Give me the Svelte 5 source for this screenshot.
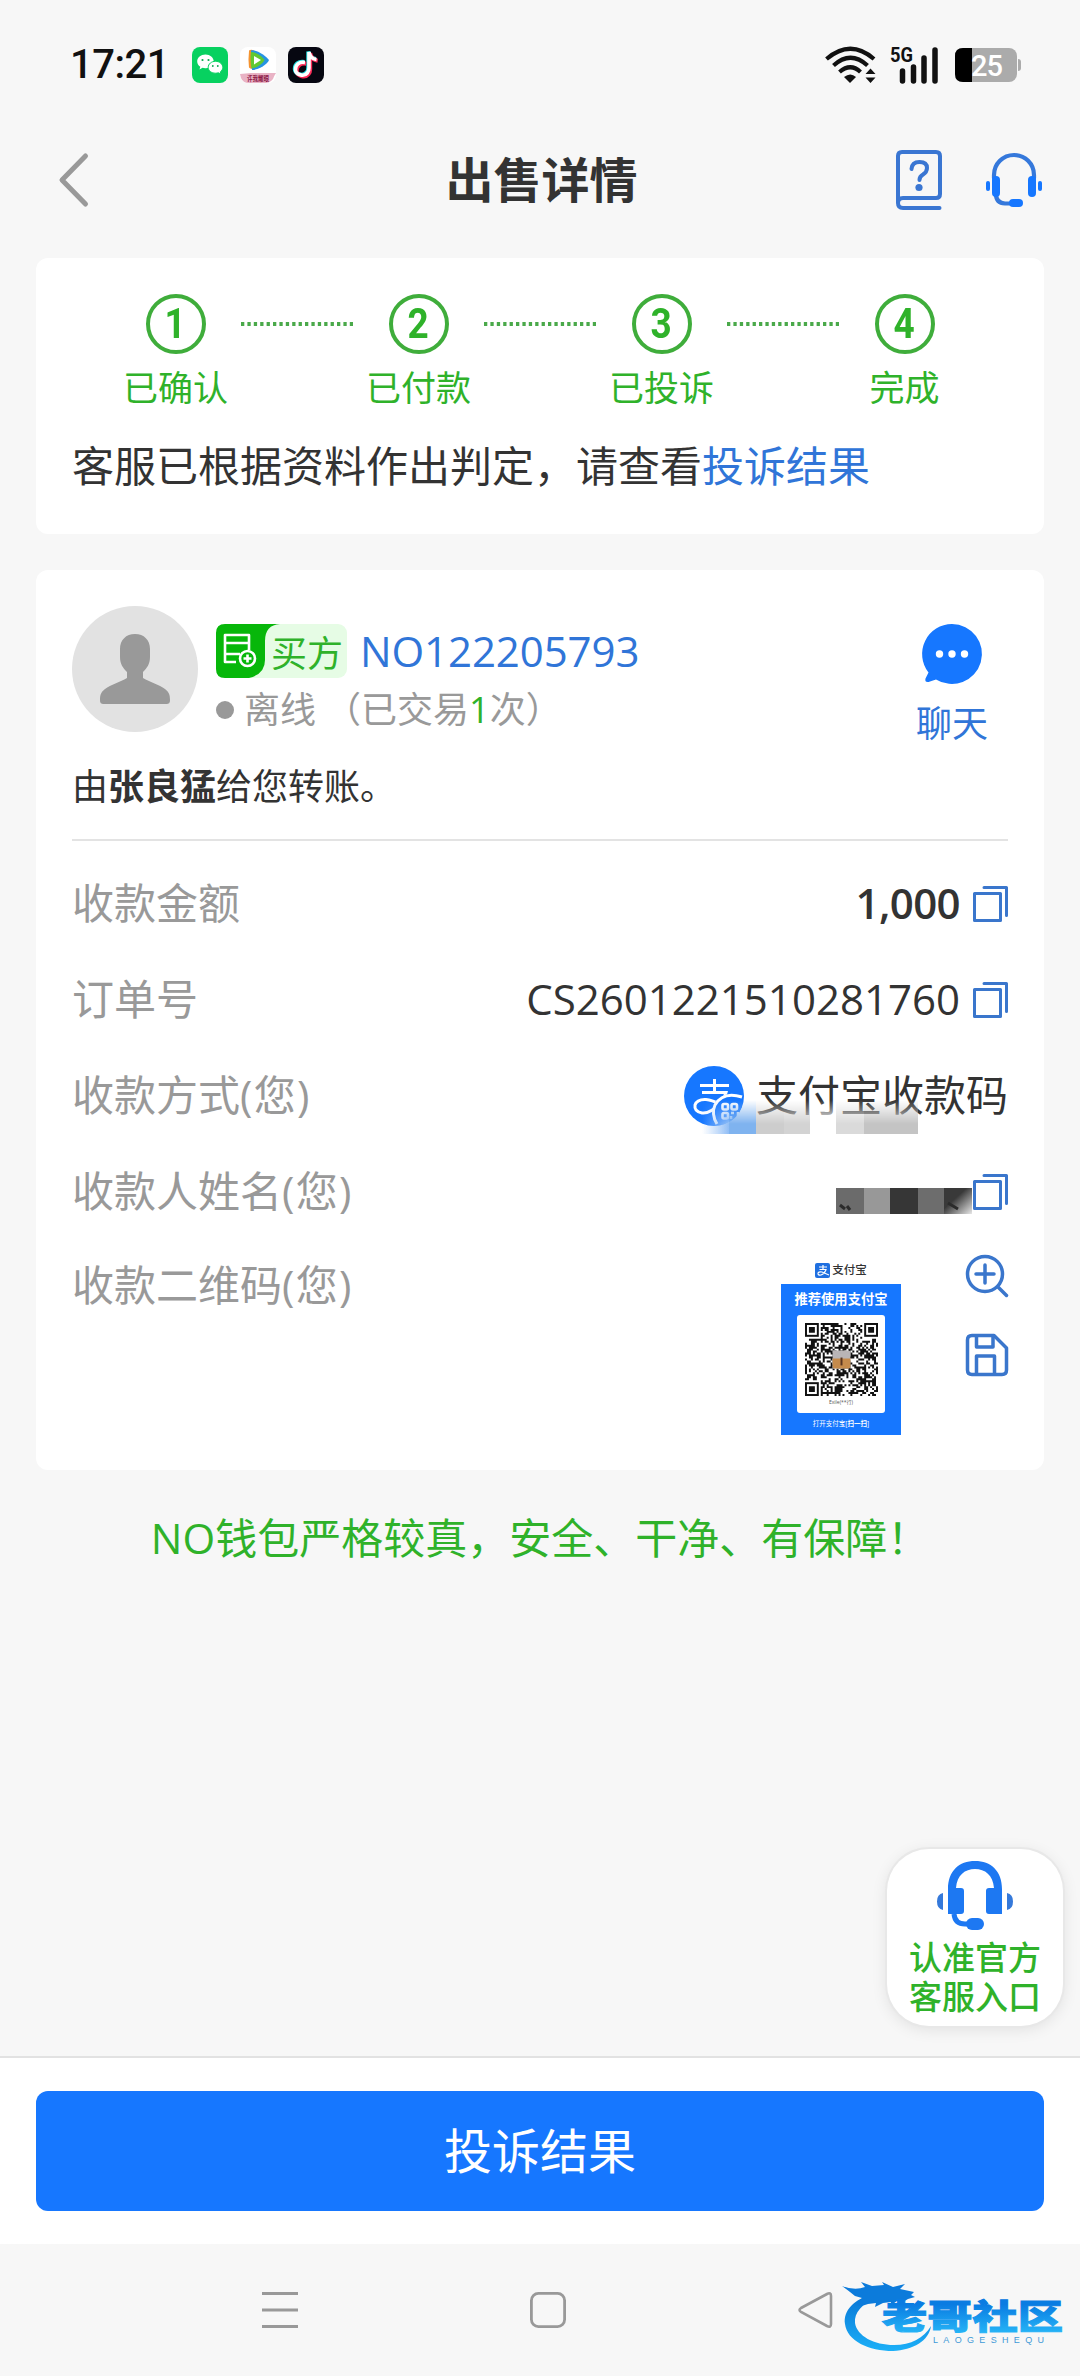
<script>
	const steps = [
		{ number: 1, label: "已确认" },
		{ number: 2, label: "已付款" },
		{ number: 3, label: "已投诉" },
		{ number: 4, label: "完成" }
	];

	const QR_SIZE = 37;

	const isFinder = (x, y) => {
		const corners = [[0, 0], [QR_SIZE - 7, 0], [0, QR_SIZE - 7]];
		return corners.some(([cx, cy]) => x >= cx - 1 && x <= cx + 7 && y >= cy - 1 && y <= cy + 7);
	}

	const getQrPath = () => {
		let seed = 20260;
		let path = "";
		for (let y = 0; y < QR_SIZE; y++) {
			for (let x = 0; x < QR_SIZE; x++) {
				seed = (seed * 1103515245 + 12345) % 2147483648;
				if (isFinder(x, y)) continue;
				if ((seed >> 12) % 100 < 50) path += `M${x} ${y}h1v1h-1z`;
			}
		}
		return path;
	}

	const qrPath = getQrPath();
</script>

{#snippet copyIcon()}
	<svg class="copy" width="36" height="38" viewBox="0 0 36 38" fill="none" stroke="#3a76cc" stroke-width="3" stroke-linejoin="round" stroke-linecap="round">
		<rect x="2.5" y="8.5" width="26" height="27" />
		<path d="M12 2.5h22.500v28" />
	</svg>
{/snippet}

<main lang="zh-CN">
	<div class="status-bar">
		<span class="time">17:21</span>
		<svg width="36" height="36" viewBox="0 0 36 36">
			<rect width="36" height="36" rx="8" fill="#07d160" />
			<path d="M13.500 7.500c-4.700 0-8.300 3-8.300 6.900 0 2.200 1.200 4.100 3.100 5.400l-.8 2.600 3-1.600c1.200.3 2.200.5 3.400.4 4.400-.2 7.800-3.200 7.800-6.900 0-3.800-3.700-6.800-8.200-6.800z" fill="#fff" />
			<path d="M23.500 14.300c4 0 7.300 2.700 7.300 6.100 0 1.800-1 3.400-2.500 4.500l.6 2.200-2.500-1.300c-.9.3-1.900.4-2.900.4-4.100 0-7.300-2.600-7.300-5.800 0-3.400 3.200-6.100 7.300-6.100z" fill="#fff" stroke="#07d160" stroke-width="1" />
			<g fill="#07a84e"><circle cx="10.500" cy="13" r="1.100" /><circle cx="16.500" cy="13" r="1.100" /><circle cx="20.800" cy="19" r=".9" /><circle cx="25.800" cy="19" r=".9" /></g>
		</svg>
		<svg width="36" height="36" viewBox="0 0 36 36">
			<rect width="36" height="36" rx="8" fill="#fff" />
			<path d="M9 3.500q-1 9.500 0 17 1.500 2 5 1L14 3.500q-3-1.500-5 0z" fill="#f59331" />
			<path d="M11 3.500c5-1.500 15 5 18 9.500-2 5-11 10-17 10z" fill="#2694e2" />
			<path d="M11 5c5 0 11 4 13.500 8-2 4-8 8-13 8.500-1-5-1.300-11-.5-16.500z" fill="#62c832" />
			<path d="M14 9l7 4-7 4.500z" fill="#fff" />
			<path d="M0 27l11-1 25 0q-2 3-3 6-3 4-8 4H9q-6 0-8-5z" fill="#e9b3c5" />
			<text x="18" y="33.500" font-size="7" font-weight="700" fill="#8d1747" text-anchor="middle" textLength="22" lengthAdjust="spacingAndGlyphs">许我耀眼</text>
		</svg>
		<svg width="36" height="36" viewBox="0 0 36 36" fill="none" stroke-width="4">
			<rect width="36" height="36" rx="8" fill="#060711" />
			<path d="M17 15.500c-6-1-9.500 2.500-9.500 7 0 5 8 8 11.800 3.500 1.300-1.500 1.700-3 1.700-5V5c.8 4.500 3.500 7 7.500 7.500" stroke="#27e4e8" transform="translate(-.7 -.6)" />
			<path d="M17 15.500c-6-1-9.500 2.500-9.500 7 0 5 8 8 11.800 3.500 1.300-1.500 1.700-3 1.700-5V5c.8 4.500 3.500 7 7.500 7.500" stroke="#fb2c59" transform="translate(1.200 1.200)" />
			<path d="M17 15.500c-6-1-9.500 2.500-9.500 7 0 5 8 8 11.800 3.500 1.300-1.500 1.700-3 1.700-5V5c.8 4.500 3.500 7 7.500 7.500" stroke="#fff" stroke-width="3.600" />
		</svg>
		<div class="signals">
			<svg width="52" height="38" viewBox="0 0 52 38" fill="none" stroke="#111" stroke-width="4.200">
				<path d="M1.500 13Q25.500-7.500 49 13M8.500 19.500Q25.500 4 42.500 19.500M14.500 26Q25.500 16.500 35.500 26" />
				<path d="M19 31q6.500-5 12 0l-6 6z" fill="#111" stroke="none" />
				<path d="M40.500 28l5-5.500 5 5.500zM40.500 31.500h10l-5 5.500z" fill="#111" stroke="none" />
			</svg>
			<svg class="cellular" width="50" height="46" viewBox="0 -8 50 46">
				<text x="0" y="16" font-size="21" font-weight="700" fill="#111" textLength="23" lengthAdjust="spacingAndGlyphs">5G</text>
				<path d="M12.500 25v10M23.500 21v14M34 12v23M45 4v31" stroke="#111" stroke-width="5.500" stroke-linecap="round" />
			</svg>
			<svg width="66" height="34" viewBox="0 0 66 34">
				<rect width="62" height="34" rx="8" fill="#ababab" />
				<path d="M63 11q3 0 3 3v6q0 3-3 3z" fill="#ababab" />
				<path d="M17 0H8Q0 0 0 8v18q0 8 8 8h9z" fill="#000" />
				<text x="32" y="28" font-size="29" font-weight="500" fill="#fff" text-anchor="middle" textLength="32">25</text>
			</svg>
		</div>
	</div>

	<header>
		<svg class="back" width="34" height="56" viewBox="0 0 34 56" fill="none" stroke="#999" stroke-width="5" stroke-linecap="round" stroke-linejoin="round">
			<path d="M27.500 4L4 28l23.500 24" />
		</svg>
		<h1>出售详情</h1>
		<div class="header-icons">
			<svg width="48" height="62" viewBox="0 0 48 62" fill="none" stroke="#3a76d2" stroke-width="4" stroke-linecap="round" stroke-linejoin="round">
				<path d="M44.500 59H8q-5 0-5-5V7q0-4 4-4h34q4 0 4 4v38q0 4-4 4H8q-5 0-5 5" />
				<path d="M16.500 20q.500-7 8-7t7.500 6q0 4-4 6.500-3.500 2-3.500 5.500" />
				<circle cx="24" cy="38.500" r="3.600" fill="#3a76d2" stroke="none" />
			</svg>
			<svg width="58" height="58" viewBox="0 0 58 58" fill="none" stroke="#3578db" stroke-width="4.200" stroke-linecap="round">
				<path d="M9 27v-3a20 20 0 0 1 40 0v3M11 43q0 9 9 9.500h8" />
				<g fill="#1677ff" stroke="none">
					<rect x="7" y="25" width="8" height="21" rx="4" />
					<rect x="43" y="25" width="8" height="21" rx="4" />
					<rect x="24" y="48" width="14" height="8" rx="4" />
					<rect x="1" y="30" width="4" height="10" rx="2" />
					<rect x="53" y="30" width="4" height="10" rx="2" />
				</g>
			</svg>
		</div>
	</header>

	<section class="card progress">
		<div class="steps">
			{#each steps as step, index}
				{#if index > 0}
					<svg class="dots" width="112" height="4" viewBox="0 0 112 4">
						<path d="M0 2h112" stroke="#4aa94a" stroke-width="4" stroke-dasharray="3.300 3.100" />
					</svg>
				{/if}
				<div class="step">
					<div class="circle"><span>{step.number}</span></div>
					<span class="step-label">{step.label}</span>
				</div>
			{/each}
		</div>
		<p>客服已根据资料作出判定，请查看<a href="#result">投诉结果</a></p>
	</section>

	<section class="card order">
		<div class="buyer">
			<svg class="avatar" width="126" height="126" viewBox="0 0 126 126">
				<circle cx="63" cy="63" r="63" fill="#e2e2e2" />
				<path d="M63 28c9 0 15 6 15 15v8c0 7-3 11-7 15v6c7 4 15 6 22 11 4 3 5 6 5 11 0 3-1 4-4 4H32c-3 0-4-1-4-4 0-5 1-8 5-11 7-5 15-7 22-11v-6c-4-4-7-8-7-15v-8c0-9 6-15 15-15z" fill="#999" />
			</svg>
			<div class="buyer-info">
				<div class="buyer-id">
					<div class="badge">
						<svg width="64" height="54" viewBox="0 0 64 54" fill="none" stroke="#fff" stroke-width="2.600">
							<path d="M9 0h55q-15 1-15 17v19q0 14-16 18H9q-9 0-9-9V9q0-9 9-9z" fill="#07b70a" stroke="none" />
							<path d="M20 38H9V30h12M33 26V11H9v8h24M9 19v11M9 30h15" stroke-linejoin="round" />
							<circle cx="31.500" cy="34.500" r="7.500" />
							<path d="M31.500 30.500v8M27.500 34.500h8" />
						</svg>
						<span>买方</span>
					</div>
					<span class="number">NO122205793</span>
				</div>
				<div class="buyer-status"><i></i>离线<span class="deals">（已交易<b>1</b>次）</span></div>
			</div>
			<div class="chat">
				<svg width="60" height="60" viewBox="0 0 60 60">
					<path d="M30 0a30 30 0 1 1-16 55.400L6.500 58q-4 .5-3-3.500L6.500 48.500A30 30 0 0 1 30 0z" fill="#1677ff" />
					<g fill="#fff"><circle cx="17.500" cy="30" r="3.700" /><circle cx="30" cy="30" r="3.700" /><circle cx="42.500" cy="30" r="3.700" /></g>
				</svg>
				<span>聊天</span>
			</div>
		</div>
		<p class="transfer">由<b>张良猛</b>给您转账。</p>

		<div class="rows">
			<div class="row">
				<span class="label">收款金额</span>
				<span class="value amount">1,000</span>
				{@render copyIcon()}
			</div>
			<div class="row">
				<span class="label">订单号</span>
				<span class="value">CS2601221510281760</span>
				{@render copyIcon()}
			</div>
			<div class="row">
				<span class="label">收款方式<span class="owner">(您)</span></span>
				<svg class="alipay" width="60" height="60" viewBox="0 0 60 60" fill="none" stroke="#fff" stroke-width="3">
					<circle cx="30" cy="30" r="30" fill="#1677ff" stroke="none" />
					<path d="M16 19.500h29M30.500 13v13M18 26.500h24q-2 7-7 12M35 38q-9 10-17 9-8-1.500-7-8 2-6 11-5.500 6 .5 13 4.500" />
					<path d="M29 48q-1-17 16-20 8-.5 14 4.500-1 20-20 26-9-2-10-10.500z" fill="#1677ff" stroke="none" />
					<path d="M33 58q-6-10-2-19 8-14 27-8" />
					<g stroke-width="2.600"><rect x="38.500" y="38" width="5.500" height="5.500" rx="1.500" /><rect x="47.500" y="38" width="5.500" height="5.500" rx="1.500" /><rect x="38.500" y="47" width="5.500" height="5.500" rx="1.500" /><path d="M47 47h3M54 46v4M47 53v-3M51 53h4" /></g>
				</svg>
				<span class="value">支付宝收款码</span>
				<svg class="mosaic" width="218" height="34" viewBox="0 0 218 34">
					<defs>
						<linearGradient id="fade" x1="0" y1="0" x2="0" y2="1"><stop offset="0" stop-color="#fff" stop-opacity="0" /><stop offset=".7" stop-color="#fff" /></linearGradient>
						<linearGradient id="edge" x1="0" y1="0" x2="1" y2="0"><stop offset="0" stop-color="#a9ccf8" stop-opacity="0" /><stop offset="1" stop-color="#90bdf5" /></linearGradient>
						<mask id="fade-mask"><rect width="218" height="34" fill="url(#fade)" /></mask>
					</defs>
					<g mask="url(#fade-mask)">
						<path d="M0 0h27v34H0z" fill="url(#edge)" />
						<path d="M27 0h27v34H27z" fill="#7fb3ef" />
						<path d="M54 0h28v34H54z" fill="#cdcdcd" />
						<path d="M82 0h26v34H82z" fill="#d3d3d3" />
						<path d="M108 0h26v34h-26z" fill="#fff" />
						<path d="M134 0h28v34h-28z" fill="#dadada" />
						<path d="M162 0h54v34h-54z" fill="#c4c4c4" />
					</g>
				</svg>
			</div>
			<div class="row">
				<span class="label">收款人姓名<span class="owner">(您)</span></span>
				<svg class="hidden-name" width="136" height="26" viewBox="0 0 136 26">
					<defs>
						<linearGradient id="corner" x1="0" y1="0" x2="1" y2="1"><stop offset=".4" stop-color="#393939" /><stop offset="1" stop-color="#e8e8e8" /></linearGradient>
					</defs>
					<path d="M0 0h28v26H0z" fill="#6b6b6b" />
					<path d="M28 0h26v26H28z" fill="#989898" />
					<path d="M54 0h28v26H54z" fill="#363636" />
					<path d="M82 0h26v26H82z" fill="#6d6d6d" />
					<path d="M108 0h28v26h-28z" fill="url(#corner)" />
					<path d="M4 17l5 4M11 18l3 4M112 15l10 6" stroke="#2b2b2b" stroke-width="3" />
				</svg>
				{@render copyIcon()}
			</div>
			<div class="row qr-row">
				<span class="label">收款二维码<span class="owner">(您)</span></span>
				<div class="qr-card">
					<div class="qr-brand">
						<svg width="15" height="15" viewBox="0 0 15 15" fill="none" stroke="#fff" stroke-width="1.200">
							<rect width="15" height="15" rx="2" fill="#1f6fe0" stroke="none" />
							<path d="M4 4h8M8 2v4M4.500 6.500h6.500q-1.500 4.500-5 5.500-3 .5-3-1.500t4-1.500l7 3" />
						</svg>
						支付宝
					</div>
					<div class="qr-body">
						<span class="qr-title">推荐使用支付宝</span>
						<div class="qr-box">
							<svg width="73" height="73" viewBox="0 0 37 37">
								<path d={qrPath} fill="#111" />
								<g fill="none" stroke="#111">
									<rect x=".5" y=".5" width="6" height="6" />
									<rect x="30.500" y=".5" width="6" height="6" />
									<rect x=".5" y="30.500" width="6" height="6" />
								</g>
								<path d="M2 2h3v3H2zM32 2h3v3h-3zM2 32h3v3H2z" fill="#111" />
								<rect x="14" y="14" width="9" height="9" rx="1" fill="#b9b5b6" />
								<path d="M14 18h9v4q0 1-1 1h-7q-1 0-1-1z" fill="#c58b4c" />
								<path d="M18 17.500h1v4h-1z" fill="#5b3722" />
							</svg>
							<span>Exile(**行)</span>
						</div>
						<span class="qr-hint">打开支付宝[<b>扫一扫</b>]</span>
					</div>
				</div>
				<div class="qr-actions">
					<svg width="44" height="44" viewBox="0 0 44 44" fill="none" stroke="#3a76cc" stroke-width="3.500" stroke-linecap="round">
						<circle cx="20" cy="20" r="17.500" />
						<path d="M20 11v18M11 20h18M33 33l8.500 8.500" />
					</svg>
					<svg width="44" height="44" viewBox="0 0 44 44" fill="none" stroke="#3a76cc" stroke-width="3.500" stroke-linejoin="round">
						<path d="M7 2.500h22L41.500 15v22q0 4.500-4.500 4.500H7q-4.500 0-4.500-4.500V7q0-4.500 4.500-4.500z" />
						<path d="M11.500 3v11h16.500V3M11.500 41V23h18v18" />
					</svg>
				</div>
			</div>
		</div>
	</section>

	<p class="slogan">NO钱包严格较真，安全、干净、有保障！</p>

	<div class="support">
		<svg width="78" height="72" viewBox="0 0 78 72">
			<path d="M12 54V29C12 11 23 1 39 1s27 10 27 28v25H53q-3 0-3-3V31q0-3 3-3h5C57 15 49 9 39 9s-18 6-19 19h5q3 0 3 3v20q0 3-3 3z" fill="#1d78f2" />
			<path d="M18 54q1 10 11 10h6" fill="none" stroke="#1d78f2" stroke-width="5" />
			<rect x="30" y="58" width="18" height="12" rx="6" fill="#1d78f2" />
			<path d="M7 33v17q-6-1-6-8.500T7 33zM71 33v17q6-1 6-8.500T71 33z" fill="#3579da" />
		</svg>
		<span>认准官方<br>客服入口</span>
	</div>

	<footer>
		<button>投诉结果</button>
	</footer>

	<nav>
		<svg width="38" height="38" viewBox="0 0 38 38" stroke="#999" stroke-width="3">
			<path d="M1 2.500h36M1 19h36M1 35.500h36" />
		</svg>
		<svg width="38" height="38" viewBox="0 0 38 38" fill="none" stroke="#999" stroke-width="2.800">
			<rect x="2.400" y="2.400" width="33.200" height="33.200" rx="7" />
		</svg>
		<svg width="38" height="38" viewBox="0 0 38 38" fill="none" stroke="#999" stroke-width="2.600">
			<path d="M4 17L30 3q4-2 4 2v28q0 4-4 2L4 21q-3-2 0-4z" />
		</svg>
		<svg class="logo" width="224" height="74" viewBox="0 0 224 74">
			<defs>
				<linearGradient id="wave" x1="0" y1="0" x2="0" y2="1"><stop offset="0" stop-color="#0874d4" /><stop offset="1" stop-color="#1cb0f8" /></linearGradient>
				<linearGradient id="word" x1="0" y1="0" x2="0" y2="1"><stop offset=".25" stop-color="#0a7ce2" /><stop offset="1" stop-color="#2bc0fb" /></linearGradient>
			</defs>
			<path d="M31 15C12 20 1 32 3 45c2 17 24 27 48 27 20-1 36-10 38-25-7 12-20 19-37 19-20 0-37-9-39-22-1-10 7-20 22-25z" fill="url(#wave)" />
			<path d="M0 7q13 5 23 1l-4-5 11 4 12-1-2-3 11 5 12-3-5 5 14 3-3 3 4 2-7 2-5 3-6-1-7 5 1-4-8 1-8 4 1-4-8 1q-7 3-11 1l5-7-7-2Q7 12 0 7z" fill="#0c7bdb" />
			<text x="40" y="50" class="logo-name" textLength="181" lengthAdjust="spacingAndGlyphs" fill="url(#word)" stroke="url(#word)">老哥社区</text>
			<text x="91" y="64" class="logo-sub" textLength="111" fill="#3f9ad7">LAOGESHEQU</text>
		</svg>
	</nav>
</main>

<style>
	:global(body) {
		background: #f7f7f7;
	}

	main {
		--blue: #1677ff;
		--link: #3075d8;
		--green: #2fb22a;
		--gray: #999;

		display: flex;
		flex-direction: column;
		position: relative;
		box-sizing: border-box;
		width: 1080px;
		height: 2376px;
		overflow: hidden;
		background: #f7f7f7;
		color: #333;
		font-family: "Open Sans", "Noto Sans CJK SC", sans-serif;
		font-size: 42px;
		line-height: 60px;
	}

	svg {
		display: block;
		flex: none;
		overflow: visible;
	}

	p, h1 {
		margin: 0;
	}

	/* status bar */

	.status-bar {
		display: flex;
		align-items: center;
		gap: 12px;
		height: 130px;
		padding: 0 59px 0 70px;
		box-sizing: border-box;
		font-family: Roboto, "Noto Sans CJK SC", sans-serif;
	}

	.time {
		width: 110px;
		color: #111;
		font-size: 40px;
		font-weight: 500;
		letter-spacing: -0.5px;
	}

	.signals {
		display: flex;
		align-items: center;
		margin-left: auto;
	}

	.cellular {
		margin: -8px 15px 0 13px;
	}

	/* header */

	header {
		display: grid;
		grid-template-columns: 1fr auto 1fr;
		align-items: center;
		height: 100px;
		padding: 0 37px 0 58px;
		margin-bottom: 28px;
	}

	h1 {
		font-size: 48px;
		font-weight: 700;
		transform: translateX(-9px);
	}

	.header-icons {
		display: flex;
		justify-content: flex-end;
		align-items: center;
		gap: 42px;
	}

	/* cards */

	.card {
		flex: none;
		box-sizing: border-box;
		margin: 0 36px 36px;
		padding: 36px;
		border-radius: 12px;
		background: #fff;
	}

	.progress {
		height: 276px;
	}

	.steps {
		display: flex;
		justify-content: center;
		margin-bottom: 26px;
	}

	.step {
		display: flex;
		flex-direction: column;
		align-items: center;
		width: 131px;
		color: var(--green);
		font-size: 35px;
		line-height: 44px;
	}

	.circle {
		display: flex;
		justify-content: center;
		align-items: center;
		box-sizing: border-box;
		width: 60px;
		height: 60px;
		margin-bottom: 12px;
		border: 4px solid #3fad3b;
		border-radius: 50%;
		font-family: Roboto, sans-serif;
		font-size: 42px;
		font-weight: 700;
	}

	.circle span {
		transform: scaleX(0.88);
	}

	.dots {
		margin-top: 28px;
	}

	a {
		color: var(--link);
		text-decoration: none;
	}

	.order {
		height: 900px;
		margin-bottom: 38px;
	}

	.buyer {
		display: flex;
		height: 126px;
	}

	.buyer-info {
		padding: 18px 0 0 18px;
	}

	.buyer-id {
		display: flex;
		align-items: center;
		gap: 13px;
		height: 54px;
	}

	.badge {
		display: flex;
		width: 131px;
		height: 54px;
		border-radius: 9px;
		background: #e6fce5;
		color: var(--green);
		font-size: 36px;
		line-height: 60px;
	}

	.badge span {
		margin-left: -9px;
		white-space: nowrap;
	}

	.number {
		color: var(--link);
		letter-spacing: -0.1px;
	}

	.buyer-status {
		display: flex;
		align-items: center;
		margin-top: 5px;
		color: var(--gray);
		font-size: 36px;
		line-height: 54px;
	}

	.buyer-status i {
		width: 18px;
		height: 18px;
		margin-right: 10px;
		border-radius: 50%;
		background: var(--gray);
	}

	.deals {
		margin-left: 9px;
	}

	.deals b {
		color: var(--green);
		font-weight: 500;
	}

	.chat {
		display: flex;
		flex-direction: column;
		align-items: center;
		gap: 15px;
		margin: 18px 20px 0 auto;
		color: var(--link);
		font-size: 36px;
		line-height: 50px;
	}

	.transfer {
		height: 107px;
		border-bottom: 2px solid #e3e3e3;
		font-size: 36px;
		line-height: 109px;
	}

	.rows {
		padding-top: 15px;
	}

	.row {
		display: flex;
		align-items: center;
		position: relative;
		height: 96px;
	}

	.label {
		margin: -3px auto 0 0;
		color: var(--gray);
	}

	.owner {
		letter-spacing: 1.3px;
	}

	.value {
		margin-top: -2px;
	}

	.copy {
		margin-left: 12px;
	}

	.amount {
		font-weight: 600;
		letter-spacing: -0.6px;
	}

	.alipay {
		margin-right: 12px;
	}

	/* covers the lower part of the account name */
	.mosaic {
		position: absolute;
		left: 630px;
		top: 52px;
	}

	.hidden-name {
		margin: 18px -12px 0 0;
	}

	.qr-row {
		align-items: flex-start;
		height: 200px;
	}

	.qr-row .label {
		line-height: 96px;
	}

	.qr-card {
		width: 120px;
		margin: 18px 64px 0 0;
		text-align: center;
		line-height: 1;
	}

	.qr-brand {
		display: flex;
		justify-content: center;
		align-items: center;
		gap: 2px;
		height: 26px;
		box-sizing: border-box;
		padding-bottom: 2px;
		font-size: 11.5px;
		font-weight: 500;
	}

	.qr-body {
		display: flex;
		flex-direction: column;
		align-items: center;
		height: 151px;
		background: var(--blue);
		color: #fff;
	}

	.qr-title {
		margin: 8px 0;
		font-size: 13.3px;
		font-weight: 700;
		line-height: 15px;
		white-space: nowrap;
	}

	.qr-box {
		display: flex;
		flex-direction: column;
		align-items: center;
		gap: 4px;
		width: 88px;
		height: 98px;
		padding-top: 8px;
		box-sizing: border-box;
		border-radius: 3px;
		background: #fff;
		color: #555;
		font-size: 5px;
	}

	.qr-hint {
		margin-top: 8px;
		font-size: 6.5px;
	}

	.qr-actions {
		display: flex;
		flex-direction: column;
		gap: 35px;
		margin: 14px -1px 0 0;
	}

	.slogan {
		color: var(--green);
		text-align: center;
	}

	/* floating entry */

	.support {
		display: flex;
		flex-direction: column;
		align-items: center;
		gap: 6px;
		position: absolute;
		right: 17px;
		bottom: 350px;
		box-sizing: border-box;
		width: 176px;
		height: 177px;
		padding-top: 11px;
		border-radius: 42px;
		background: #fff;
		box-shadow: 0 0 0 2px #e8e8e8, 0 3px 16px rgba(0, 0, 0, 0.1);
		color: var(--green);
		font-size: 33px;
		font-weight: 500;
		line-height: 39px;
	}

	/* bottom */

	footer {
		display: flex;
		box-sizing: border-box;
		height: 188px;
		margin-top: auto;
		padding: 33px 36px;
		border-top: 2px solid #e2e2e2;
		background: #fff;
	}

	button {
		flex: 1;
		height: 120px;
		padding: 0;
		border: none;
		border-radius: 12px;
		background: var(--blue);
		color: #fff;
		font: inherit;
		font-size: 48px;
	}

	nav {
		display: flex;
		align-items: center;
		gap: 230px;
		position: relative;
		height: 132px;
		padding-left: 261px;
	}

	.logo {
		position: absolute;
		left: 842px;
		top: 35px;
	}

	.logo-name {
		font-size: 34px;
		font-weight: 900;
		stroke-width: 1;
	}

	.logo-sub {
		font-family: "Liberation Sans", sans-serif;
		font-size: 9px;
	}
</style>
